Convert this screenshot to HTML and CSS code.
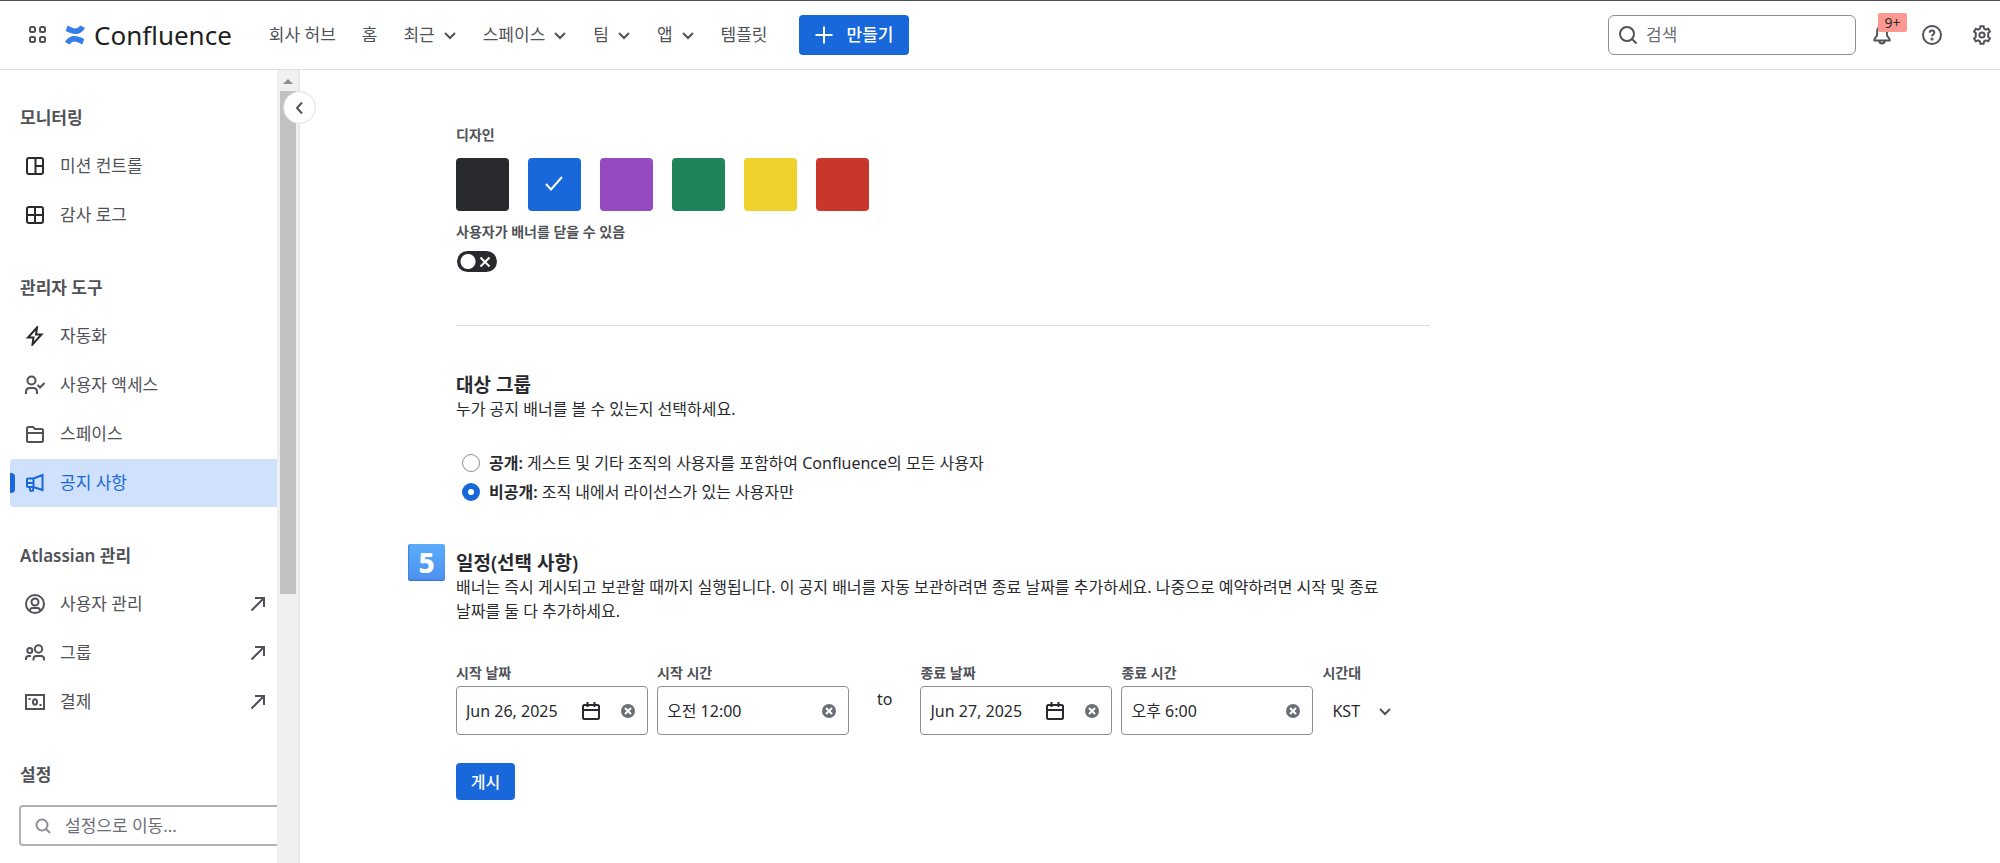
FILE: index.html
```html
<!DOCTYPE html>
<html lang="ko">
<head>
    <meta charset="UTF-8">
    <meta name="viewport" content="width=device-width, initial-scale=1.0">
    <title>공지 사항 - Confluence</title>
    <link rel="stylesheet" href="styles.css">
</head>
<body>
    <header class="header">
        <button type="button" class="icon-btn app-switcher" aria-label="앱 전환">
            <svg class="icon" width="20" height="20" viewBox="0 0 20 20"><rect x="2" y="2" width="5" height="5" rx="1.5"/><rect x="12" y="2" width="5" height="5" rx="1.5"/><rect x="2" y="12" width="5" height="5" rx="1.5"/><rect x="12" y="12" width="5" height="5" rx="1.5"/></svg>
        </button>
        <a href="#" class="logo">
            <svg width="20" height="20" viewBox="0 0 20 20" fill="#357de8"><path d="M2.6.4 C6.2 2 8 3.4 10.4 3.4 C12.6 3.4 14 2.2 15.4.6 L20 3 C17.4 7.2 14.6 9 10.8 9 C7.2 9 4 7.6.8 6 Z"/><path d="M17.4 19.6 C13.8 18 12 16.6 9.6 16.6 C7.4 16.6 6 17.8 4.6 19.4 L0 17 C2.6 12.8 5.4 11 9.2 11 C12.8 11 16 12.4 19.2 14 Z"/></svg>
            <span>Confluence</span>
        </a>
        <nav class="nav">
            <a href="#" class="nav-item">회사 허브</a>
            <a href="#" class="nav-item">홈</a>
            <button type="button" class="nav-item">최근 <svg class="chevron" width="14" height="14" viewBox="0 0 14 14"><path d="M2 5l5 5 5-5"/></svg></button>
            <button type="button" class="nav-item">스페이스 <svg class="chevron" width="14" height="14" viewBox="0 0 14 14"><path d="M2 5l5 5 5-5"/></svg></button>
            <button type="button" class="nav-item">팀 <svg class="chevron" width="14" height="14" viewBox="0 0 14 14"><path d="M2 5l5 5 5-5"/></svg></button>
            <button type="button" class="nav-item">앱 <svg class="chevron" width="14" height="14" viewBox="0 0 14 14"><path d="M2 5l5 5 5-5"/></svg></button>
            <a href="#" class="nav-item">템플릿</a>
        </nav>
        <button type="button" class="btn btn-create">
            <svg width="18" height="18" viewBox="0 0 18 18"><path d="M9 .5v17M.5 9h17"/></svg>
            만들기
        </button>
        <div class="header-right">
            <label class="search">
                <svg class="icon" width="20" height="20" viewBox="0 0 20 20"><circle cx="9" cy="9" r="7"/><path d="M14 14l4.500 4.500"/></svg>
                <input type="search" placeholder="검색" aria-label="검색">
            </label>
            <button type="button" class="icon-btn" aria-label="알림">
                <svg class="icon" width="20" height="20" viewBox="0 0 20 20"><path d="M10 1.500c-3 0-4.600 2-4.800 4.500L5 10.500 2.500 14v1.500h15V14L15 10.500 14.800 6C14.600 3.500 13 1.500 10 1.500zM7.200 16c.3 1.500 1.400 2.500 2.800 2.500s2.500-1 2.800-2.500"/></svg>
                <span class="badge">9+</span>
            </button>
            <button type="button" class="icon-btn" aria-label="도움말">
                <svg class="icon" width="20" height="20" viewBox="0 0 20 20"><circle cx="10" cy="10" r="9"/><path d="M7.700 7.800c0-1.400 1-2.200 2.300-2.200s2.300.8 2.300 2.100c0 1.700-2.300 1.800-2.300 3.600"/><circle cx="10" cy="14" r=".6"/></svg>
            </button>
            <button type="button" class="icon-btn" aria-label="설정">
                <svg class="icon" width="20" height="20" viewBox="0 0 20 20"><circle cx="10" cy="10" r="2.600"/><path d="M8.400 1.200h3.200l.5 2.400 1.700 1 2.400-.8 1.700 2.700-1.700 1.700v3.600l1.700 1.700-1.700 2.700-2.400-.8-1.700 1-.5 2.400H8.400l-.5-2.400-1.700-1-2.400.8-1.700-2.700 1.700-1.700V8.200L2.100 6.500l1.700-2.700 2.400.8 1.700-1z"/></svg>
            </button>
        </div>
    </header>

    <div class="layout">
        <aside class="sidebar">
            <div class="sidebar-scroll">
                <section class="menu-group">
                    <h2 class="menu-title">모니터링</h2>
                    <a href="#" class="menu-item dark">
                        <svg class="icon" width="20" height="20" viewBox="0 0 20 20"><rect x="2" y="2" width="16" height="16" rx="2"/><path d="M10.500 2v16M10.500 10H18"/></svg>
                        <span>미션 컨트롤</span>
                    </a>
                    <a href="#" class="menu-item dark">
                        <svg class="icon" width="20" height="20" viewBox="0 0 20 20"><rect x="2" y="2" width="16" height="16" rx="2"/><path d="M10 2v16M2 10h16"/></svg>
                        <span>감사 로그</span>
                    </a>
                </section>

                <section class="menu-group">
                    <h2 class="menu-title">관리자 도구</h2>
                    <a href="#" class="menu-item dark">
                        <svg class="icon" width="20" height="20" viewBox="0 0 20 20"><path d="M12 1.500L3 11.500h5.500L7.500 18.500l9-10H11z"/></svg>
                        <span>자동화</span>
                    </a>
                    <a href="#" class="menu-item">
                        <svg class="icon" width="20" height="20" viewBox="0 0 20 20"><circle cx="6.500" cy="5.500" r="4"/><path d="M1 19v-2c0-2.500 1.500-4 4-4h3c2.500 0 4 1.500 4 4v2M12.500 10l2.500 2.500L19.500 8"/></svg>
                        <span>사용자 액세스</span>
                    </a>
                    <a href="#" class="menu-item">
                        <svg class="icon" width="20" height="20" viewBox="0 0 20 20"><path d="M2 4.500C2 3.500 2.500 3 3.500 3H8l2 2h6.500c1 0 1.500.5 1.500 1.500v10c0 1-.5 1.500-1.500 1.500h-13c-1 0-1.500-.5-1.500-1.500zM2 9h16"/></svg>
                        <span>스페이스</span>
                    </a>
                    <a href="#" class="menu-item active" aria-current="page">
                        <svg class="icon" width="20" height="20" viewBox="0 0 20 20"><path d="M3 5.500h5.500L17.500 2v15l-9-3H3c-.7 0-1-.3-1-1V6.500c0-.7.3-1 1-1zM8.500 5.500V14M5 14v2.500c0 1 .6 1.500 1.500 1.500s1.700-.5 1.700-1.500V14M2 10h6.500"/></svg>
                        <span>공지 사항</span>
                    </a>
                </section>

                <section class="menu-group">
                    <h2 class="menu-title">Atlassian 관리</h2>
                    <a href="#" class="menu-item">
                        <svg class="icon" width="20" height="20" viewBox="0 0 20 20"><circle cx="10" cy="10" r="9"/><circle cx="10" cy="8" r="3.500"/><path d="M5 17v-.5C5 14.800 6 14 7.500 14h5c1.500 0 2.500.8 2.500 2.500v.5"/></svg>
                        <span>사용자 관리</span>
                        <svg class="icon external" width="16" height="16" viewBox="0 0 16 16"><path d="M1.500 14.500L14 2M5 2h9v9"/></svg>
                    </a>
                    <a href="#" class="menu-item">
                        <svg class="icon" width="20" height="20" viewBox="0 0 20 20"><circle cx="4.800" cy="7.500" r="2.500"/><circle cx="13.500" cy="6" r="3.700"/><path d="M1 17v-1.500C1 14 2 13 3.500 13H6M8.500 17.500V16c0-1.800 1-3 3-3H16c2 0 3 1.200 3 3v1.500"/></svg>
                        <span>그룹</span>
                        <svg class="icon external" width="16" height="16" viewBox="0 0 16 16"><path d="M1.500 14.500L14 2M5 2h9v9"/></svg>
                    </a>
                    <a href="#" class="menu-item">
                        <svg class="icon" width="20" height="20" viewBox="0 0 20 20"><rect x="1" y="3" width="18" height="14"/><ellipse cx="10" cy="10" rx="2" ry="2.800"/><path d="M4.500 6v2M15.500 12v2"/></svg>
                        <span>결제</span>
                        <svg class="icon external" width="16" height="16" viewBox="0 0 16 16"><path d="M1.500 14.500L14 2M5 2h9v9"/></svg>
                    </a>
                </section>

                <section class="menu-group">
                    <h2 class="menu-title">설정</h2>
                    <label class="settings-search">
                        <svg class="icon" width="18" height="18" viewBox="0 0 18 18"><circle cx="8" cy="8" r="5.500"/><path d="M12 12l4 4"/></svg>
                        <input type="search" placeholder="설정으로 이동..." aria-label="설정으로 이동">
                    </label>
                    <div class="settings-block"></div>
                </section>
            </div>
            <div class="scrollbar">
                <div class="scrollbar-arrow"></div>
                <div class="scrollbar-thumb"></div>
            </div>
            <button type="button" class="collapse-btn" aria-label="사이드바 접기">
                <svg class="icon" width="14" height="14" viewBox="0 0 14 14"><path d="M9 1.500L4 7l5 5.500"/></svg>
            </button>
        </aside>

        <main class="main">
            <form class="content">
                <fieldset class="field design">
                    <legend class="label">디자인</legend>
                    <div class="swatches">
                        <input type="radio" name="color" class="swatch black" aria-label="검정">
                        <label class="swatch-checked">
                            <input type="radio" name="color" class="swatch blue" aria-label="파랑" checked>
                            <svg class="swatch-check" width="20" height="20" viewBox="0 0 20 20"><path d="M2 10l5 5.500L18 3"/></svg>
                        </label>
                        <input type="radio" name="color" class="swatch purple" aria-label="보라">
                        <input type="radio" name="color" class="swatch green" aria-label="초록">
                        <input type="radio" name="color" class="swatch yellow" aria-label="노랑">
                        <input type="radio" name="color" class="swatch red" aria-label="빨강">
                    </div>
                </fieldset>

                <div class="field dismiss">
                    <label class="label" for="dismiss">사용자가 배너를 닫을 수 있음</label>
                    <div class="toggle">
                        <input type="checkbox" id="dismiss" class="toggle-input">
                        <svg class="toggle-x" width="12" height="12" viewBox="0 0 12 12"><path d="M1.500 1.500l9 9M10.500 1.500l-9 9"/></svg>
                    </div>
                </div>

                <hr class="divider">

                <section class="section">
                    <h2 class="section-title">대상 그룹</h2>
                    <p class="text">누가 공지 배너를 볼 수 있는지 선택하세요.</p>
                    <div class="radios">
                        <label class="radio"><input type="radio" name="audience"><span><b>공개:</b> 게스트 및 기타 조직의 사용자를 포함하여 Confluence의 모든 사용자</span></label>
                        <label class="radio"><input type="radio" name="audience" checked><span><b>비공개:</b> 조직 내에서 라이선스가 있는 사용자만</span></label>
                    </div>
                </section>

                <section class="section schedule">
                    <span class="step-badge">5</span>
                    <h2 class="section-title">일정(선택 사항)</h2>
                    <p class="text">배너는 즉시 게시되고 보관할 때까지 실행됩니다. 이 공지 배너를 자동 보관하려면 종료 날짜를 추가하세요. 나중으로 예약하려면 시작 및 종료 날짜를 둘 다 추가하세요.</p>
                </section>

                <div class="dates">
                    <div class="date-field">
                        <label class="label" for="startDate">시작 날짜</label>
                        <div class="input-box">
                            <input type="text" id="startDate" value="Jun 26, 2025">
                            <svg class="icon calendar" width="20" height="20" viewBox="0 0 20 20"><rect x="2" y="4" width="16" height="14" rx="1.500"/><path d="M2 9h16M6.500 1v5M13.500 1v5"/></svg>
                            <button type="button" class="clear-btn" aria-label="지우기"><svg width="16" height="16" viewBox="0 0 16 16"><circle cx="8" cy="8" r="7"/><path d="M5 5l6 6M11 5l-6 6"/></svg></button>
                        </div>
                    </div>
                    <div class="date-field">
                        <label class="label" for="startTime">시작 시간</label>
                        <div class="input-box">
                            <input type="text" id="startTime" value="오전 12:00">
                            <button type="button" class="clear-btn" aria-label="지우기"><svg width="16" height="16" viewBox="0 0 16 16"><circle cx="8" cy="8" r="7"/><path d="M5 5l6 6M11 5l-6 6"/></svg></button>
                        </div>
                    </div>
                    <span class="to">to</span>
                    <div class="date-field">
                        <label class="label" for="endDate">종료 날짜</label>
                        <div class="input-box">
                            <input type="text" id="endDate" value="Jun 27, 2025">
                            <svg class="icon calendar" width="20" height="20" viewBox="0 0 20 20"><rect x="2" y="4" width="16" height="14" rx="1.500"/><path d="M2 9h16M6.500 1v5M13.500 1v5"/></svg>
                            <button type="button" class="clear-btn" aria-label="지우기"><svg width="16" height="16" viewBox="0 0 16 16"><circle cx="8" cy="8" r="7"/><path d="M5 5l6 6M11 5l-6 6"/></svg></button>
                        </div>
                    </div>
                    <div class="date-field">
                        <label class="label" for="endTime">종료 시간</label>
                        <div class="input-box">
                            <input type="text" id="endTime" value="오후 6:00">
                            <button type="button" class="clear-btn" aria-label="지우기"><svg width="16" height="16" viewBox="0 0 16 16"><circle cx="8" cy="8" r="7"/><path d="M5 5l6 6M11 5l-6 6"/></svg></button>
                        </div>
                    </div>
                    <div class="timezone">
                        <label class="label" for="timezone">시간대</label>
                        <div class="select-box">
                            <select id="timezone"><option>KST</option></select>
                            <svg class="chevron" width="14" height="14" viewBox="0 0 14 14"><path d="M2 5l5 5 5-5"/></svg>
                        </div>
                    </div>
                </div>

                <button type="submit" class="btn btn-publish">게시</button>
            </form>
        </main>
    </div>
</body>
</html>
```

FILE: styles.css
```css
* {
    margin: 0;
    padding: 0;
    box-sizing: border-box;
}

body {
    display: flex;
    flex-direction: column;
    height: 100vh;
    overflow: hidden;
    font-family: 'Noto Sans', 'Noto Sans CJK KR', sans-serif;
    font-size: 16px;
    line-height: 24px;
    word-break: keep-all;
    color: #292a2e;
    background-color: white;
}

a {
    color: inherit;
    text-decoration: none;
}

button,
input,
select {
    font: inherit;
    color: inherit;
    border: none;
    background: none;
    outline: none;
}

button {
    cursor: pointer;
}

svg {
    display: block;
    flex-shrink: 0;
}

.icon,
.chevron {
    fill: none;
    stroke: #505258;
    stroke-width: 2;
}

/* Header */
.header {
    display: flex;
    align-items: center;
    flex-shrink: 0;
    height: 70px;
    padding: 0 8px 0 28px;
    border-top: 1px solid #505258;
    border-bottom: 1px solid #dddee1;
    color: #505258;
    font-size: 17px;
}

.icon-btn {
    position: relative;
    display: flex;
}

.logo {
    display: flex;
    align-items: center;
    gap: 9px;
    margin-left: 17px;
    font-size: 26px;
    line-height: 32px;
    color: #1e1f21;
}

.nav {
    display: flex;
    align-items: center;
    gap: 26px;
    margin-left: 37px;
}

.nav-item {
    display: flex;
    align-items: center;
    gap: 8px;
    white-space: nowrap;
}

.btn {
    display: flex;
    align-items: center;
    justify-content: center;
    border-radius: 4px;
    background-color: #1868db;
    color: white;
    font-weight: 500;
    white-space: nowrap;
}

.btn-create {
    gap: 14px;
    height: 40px;
    padding: 0 16px;
    margin-left: 31px;
}

.btn-create svg {
    fill: none;
    stroke: white;
    stroke-width: 2;
}

.header-right {
    display: flex;
    align-items: center;
    gap: 30px;
    margin-left: auto;
}

.search {
    display: flex;
    align-items: center;
    gap: 8px;
    width: 248px;
    height: 40px;
    padding: 0 9px;
    margin-right: -14px;
    border: 1px solid #8c8f97;
    border-radius: 6px;
}

.search input,
.settings-search input {
    flex: 1;
    min-width: 0;
}

::placeholder {
    color: #6b6e76;
    opacity: 1;
}

.badge {
    position: absolute;
    top: -12px;
    left: 6px;
    width: 29px;
    border-radius: 2px;
    background-color: #fd9891;
    color: #292a2e;
    font-size: 14px;
    line-height: 19px;
    text-align: center;
}

/* Sidebar */
.layout {
    display: flex;
    flex: 1;
    min-height: 0;
}

.sidebar {
    position: relative;
    display: flex;
    flex-shrink: 0;
    width: 300px;
    border-right: 2px solid #e8e8ea;
}

.sidebar-scroll {
    flex: 1;
    min-width: 0;
    padding: 24px 0 0 10px;
    overflow: hidden;
    font-size: 17px;
    color: #505258;
}

.menu-group {
    margin-right: -4px;
    margin-bottom: 25px;
}

.menu-title {
    padding-left: 10px;
    font-size: 17px;
    font-weight: 600;
    line-height: 48px;
}

.menu-item {
    position: relative;
    display: flex;
    align-items: center;
    gap: 15px;
    height: 48px;
    padding: 0 15px;
    border-radius: 4px;
}

.menu-item + .menu-item {
    margin-top: 1px;
}

.menu-item.dark .icon {
    stroke: #292a2e;
}

.menu-item.active {
    background-color: #cfe1fd;
    color: #1868db;
}

.menu-item.active .icon {
    stroke: #1868db;
}

.menu-item.active::before {
    content: '';
    position: absolute;
    top: 14px;
    left: 0;
    width: 5px;
    height: 20px;
    border-radius: 0 4px 4px 0;
    background-color: #1868db;
}

.external {
    margin-left: auto;
}

.settings-search {
    display: flex;
    align-items: center;
    gap: 13px;
    height: 41px;
    margin: 6px 0 0 9px;
    padding: 0 13px;
    border: 2px solid #b0b2b9;
    border-radius: 4px;
}

.settings-search .icon {
    stroke: #8c8f97;
}

.settings-block {
    width: 26px;
    height: 26px;
    margin: 17px 0 0 12px;
    background-color: #dddee1;
}

.scrollbar {
    display: flex;
    flex-direction: column;
    align-items: center;
    width: 21px;
    background-color: #f0f0f0;
}

.scrollbar-arrow {
    margin: 9px 0 7px;
    border: 5px solid transparent;
    border-top: none;
    border-bottom-color: #8c8c8c;
}

.scrollbar-thumb {
    width: 16px;
    height: 503px;
    background-color: #c1c1c1;
}

.collapse-btn {
    position: absolute;
    top: 21px;
    right: -18px;
    display: flex;
    align-items: center;
    justify-content: center;
    width: 33px;
    height: 33px;
    border: 1px solid #dddee1;
    border-radius: 50%;
    background-color: white;
}

/* Main */
.main {
    flex: 1;
    min-width: 0;
    padding: 53px 32px 32px 156px;
    overflow: hidden;
}

.content {
    max-width: 974px;
}

.field {
    border: none;
}

.label {
    display: block;
    font-size: 14px;
    font-weight: 600;
    line-height: 24px;
    color: #505258;
}

.swatches {
    display: flex;
    gap: 19px;
    margin-top: 11px;
}

.swatch {
    display: block;
    width: 53px;
    height: 53px;
    border-radius: 4px;
    appearance: none;
}

.black {
    background-color: #292a2e;
}

.blue {
    background-color: #1868db;
}

.purple {
    background-color: #964ac0;
}

.green {
    background-color: #1f845a;
}

.yellow {
    background-color: #eed12b;
}

.red {
    background-color: #c9372c;
}

.swatch-checked {
    position: relative;
}

.swatch-check {
    position: absolute;
    top: 16px;
    left: 16px;
    fill: none;
    stroke: white;
    stroke-width: 2;
}

.dismiss {
    margin-top: 9px;
}

.toggle {
    position: relative;
    margin: 7px 0 0 1px;
}

.toggle-input {
    display: block;
    width: 40px;
    height: 21px;
    border-radius: 11px;
    background: radial-gradient(circle at 11px 50%, white 7px, #292a2e 8px);
    appearance: none;
}

.toggle-x {
    position: absolute;
    top: 5px;
    left: 22px;
    fill: none;
    stroke: white;
    stroke-width: 2;
}

.divider {
    margin-top: 53px;
    border: none;
    border-top: 1px solid #dddee1;
}

.section {
    position: relative;
    margin-top: 47px;
}

.section-title {
    font-size: 19px;
    font-weight: 600;
    line-height: 24px;
}

.text {
    max-width: 960px;
}

.radios {
    display: flex;
    flex-direction: column;
    gap: 5px;
    margin-top: 30px;
    padding-left: 6px;
}

.radio {
    display: flex;
    align-items: center;
    gap: 9px;
}

.radio b {
    font-weight: 600;
}

.radio input {
    width: 18px;
    height: 18px;
    border: 1px solid #8c8f97;
    border-radius: 50%;
    appearance: none;
}

.radio input:checked {
    border: 6px solid #1868db;
}

.step-badge {
    position: absolute;
    top: -7px;
    left: -48px;
    width: 37px;
    height: 37px;
    border-radius: 3px;
    background: linear-gradient(#5aaefc, #4c8fee);
    box-shadow: inset 0 -1px 1px #3b6fd6, inset 1px 0 1px #4585e0;
    color: white;
    font-size: 28px;
    font-weight: 800;
    line-height: 37px;
    text-align: center;
}

.dates {
    display: flex;
    gap: 9px;
    margin-top: 38px;
}

.dates .label {
    margin-bottom: 1px;
}

.date-field {
    width: 192px;
}

.input-box {
    display: flex;
    align-items: center;
    height: 49px;
    padding: 0 11px 0 9px;
    border: 1px solid #8c8f97;
    border-radius: 4px;
}

.input-box input {
    flex: 1;
    min-width: 0;
}

.calendar {
    margin-right: 19px;
    stroke: #292a2e;
}

.clear-btn circle {
    fill: #6b6e76;
}

.clear-btn path {
    stroke: white;
    stroke-width: 2;
}

.to {
    margin: 26px 19px 0;
}

.select-box {
    position: relative;
    display: flex;
    align-items: center;
    height: 49px;
}

.select-box select {
    width: 80px;
    padding-left: 10px;
    appearance: none;
}

.select-box .chevron {
    position: absolute;
    right: 10px;
    pointer-events: none;
}

.btn-publish {
    width: 59px;
    height: 37px;
    margin-top: 28px;
}
```
